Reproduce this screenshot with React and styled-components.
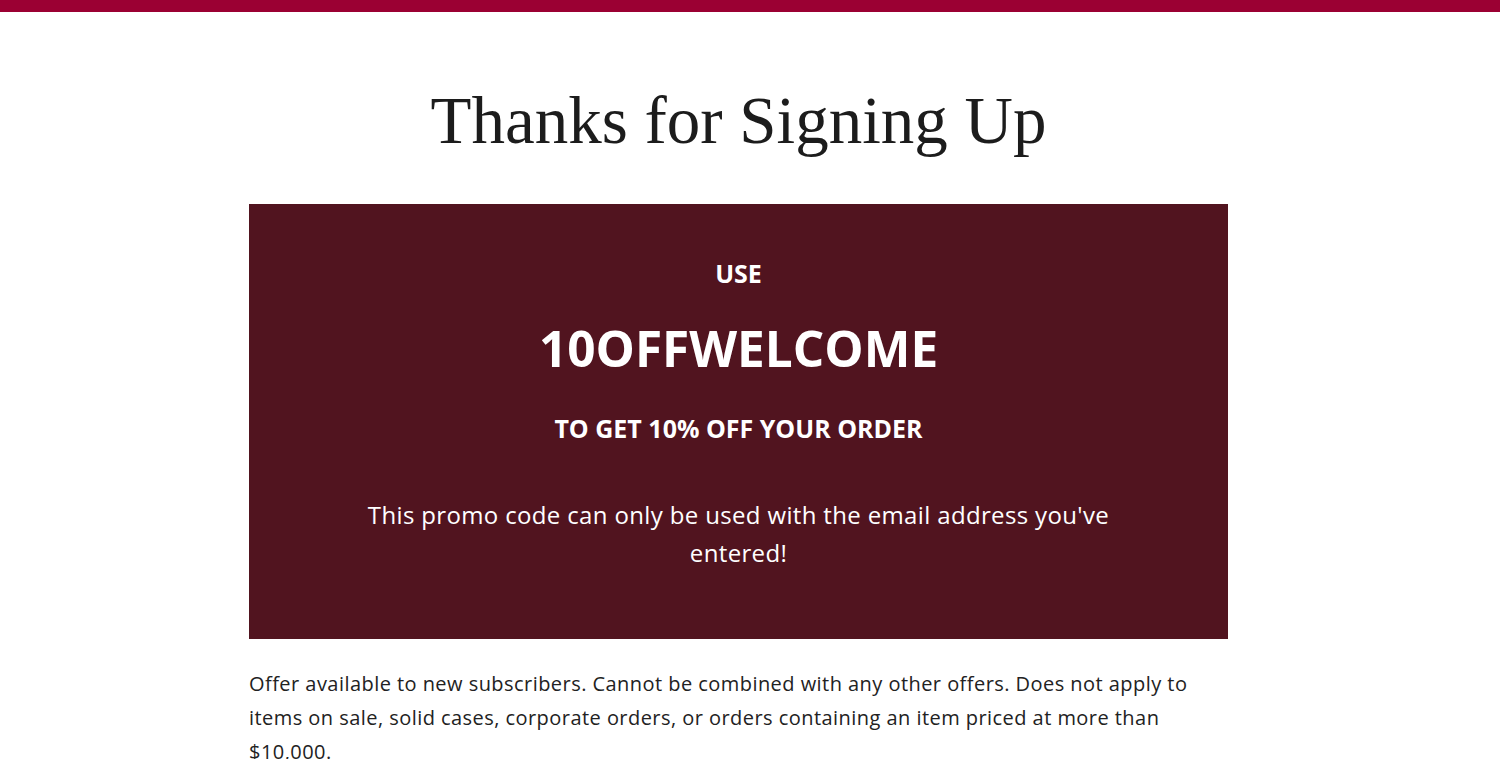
import styled, { createGlobalStyle } from "styled-components"

const GlobalStyle = createGlobalStyle`
body {
    margin: 0;
    background: #ffffff;
    font-family: "Open Sans", "Liberation Sans", sans-serif;
    color: #222222;
}
`

const TopBar = styled.div`
height: 12px;
background: #9b0033;
`

const Main = styled.main`
width: 979px;
margin-left: 249px;
padding-top: 64px;
`

const Title = styled.h1`
margin: 0 0 40px;
text-align: center;
font-family: "Liberation Serif", "DejaVu Serif", serif;
font-weight: 400;
font-size: 67px;
line-height: 88px;
color: #1c1c1c;
`

const PromoBox = styled.section`
height: 435px;
box-sizing: border-box;
background: #51141f;
color: #ffffff;
text-align: center;
padding-top: 52px;
`

const Label = styled.div`
font-weight: 700;
font-size: ${(p) => p.$size || 25}px;
line-height: 1.4;
`

const Code = styled.div`
font-weight: 700;
font-size: 49.5px;
line-height: 1.4;
margin: 23px 0 28px;
`

const Note = styled.p`
margin: 50px auto 0;
max-width: 780px;
font-size: 24px;
letter-spacing: 0.35px;
line-height: 38px;
`

const Terms = styled.p`
margin: 28px 0 0;
font-size: 20px;
letter-spacing: 0.45px;
line-height: 34px;
color: #222222;
`

const App = () => {
    return (
        <>
            <GlobalStyle />
            <TopBar />
            <Main>
                <Title>Thanks for Signing Up</Title>
                <PromoBox>
                    <Label>USE</Label>
                    <Code>10OFFWELCOME</Code>
                    <Label>TO GET 10% OFF YOUR ORDER</Label>
                    <Note>This promo code can only be used with the email address you've entered!</Note>
                </PromoBox>
                <Terms>
                    Offer available to new subscribers. Cannot be combined with any other offers. Does not apply to items on sale, solid cases, corporate orders, or orders containing an item priced at more than $10,000.
                </Terms>
            </Main>
        </>
    )
}

export default App
